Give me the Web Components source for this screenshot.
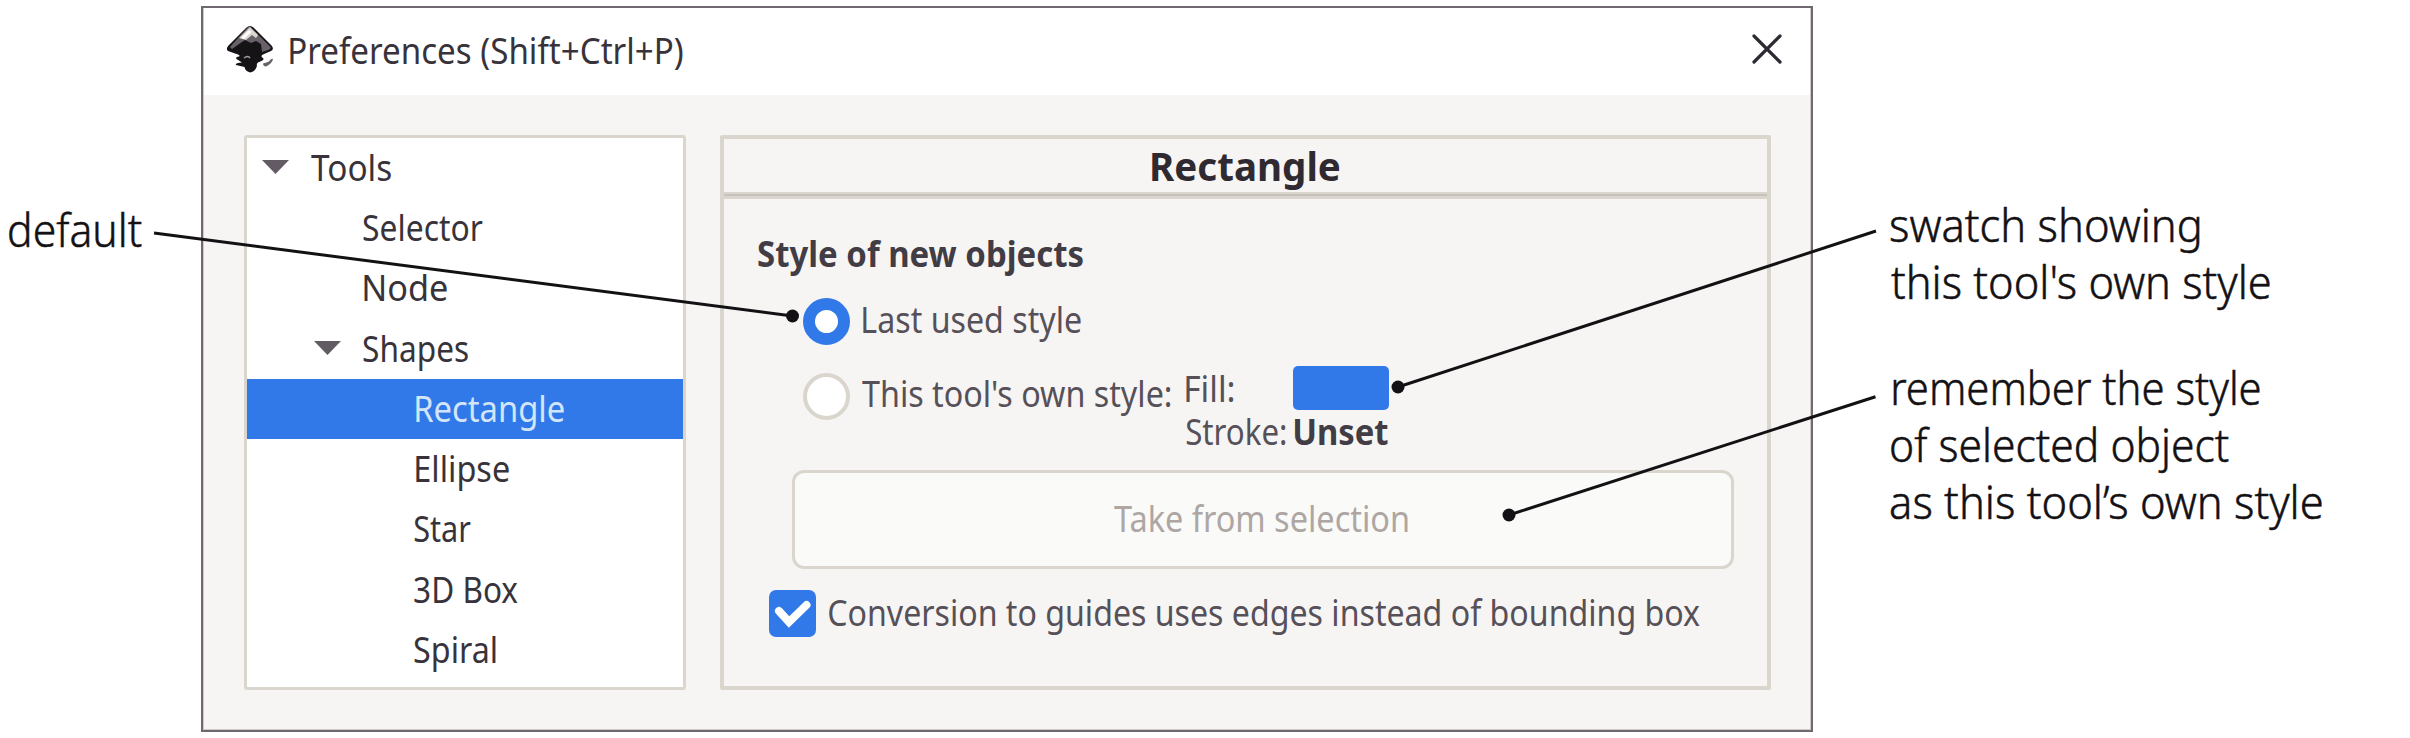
<!DOCTYPE html>
<html lang="en">
<head>
<meta charset="utf-8">
<title>Preferences</title>
<style>
html,body{margin:0;background:#fff}
body{font-family:"Noto Sans","Open Sans",sans-serif;width:2410px;height:738px;overflow:hidden}
</style>
</head>
<body>
<doc-figure></doc-figure>
<script>
const define = (name, html, init) => {
  const t = document.createElement('template');
  t.innerHTML = html;
  customElements.define(name, class extends HTMLElement {
    constructor() {
      super();
      this.attachShadow({mode: 'open'}).append(t.content.cloneNode(true));
    }
    connectedCallback() { if (init) init.call(this, this.shadowRoot); }
  });
};

/* A single line of text whose inked width is set by the "w" attribute. */
define('fit-text', `<style>
:host{display:block;height:40px;line-height:40px;font-size:36px;white-space:nowrap;flex:none}
span{display:inline-block;transform-origin:0 50%;white-space:pre}
</style><span><slot></slot></span>`, function (root) {
  const w = +this.getAttribute('w');
  this.style.width = w + 'px';
  const span = root.querySelector('span');
  const cs = getComputedStyle(this);
  const ctx = document.createElement('canvas').getContext('2d');
  ctx.font = cs.fontWeight + ' ' + cs.fontSize + ' ' + cs.fontFamily;
  const m = ctx.measureText(this.textContent);
  const ink = m.actualBoundingBoxRight + m.actualBoundingBoxLeft;
  const k = w / ink;
  span.style.transform = 'translateX(' + (m.actualBoundingBoxLeft * k) + 'px) scaleX(' + k + ')';
});

define('app-logo', `<style>:host{display:block;width:48px;height:48px;flex:none}svg{display:block}</style>
<svg width="48" height="48" viewBox="0 0 48 48">
<path d="M20.500 2.500Q24 -.5 27.500 2.500L45.500 20.500Q48.500 24 45 26L37 29.500Q34 31 37 33Q39 35 33 37Q30 38 31 41Q29 47 24 47.500Q19 46 18.500 42L10 40Q8.500 38 16 37.500L10.500 34Q9 32 13 31.500Q15 30 9 28.500L2 26Q-.5 24 2.500 20.500Z" fill="#161316"/>
<path d="M24 1.500L44.500 22Q45.500 24 42 25L36 27L35 19L30 16L25 18L19 15L13 19L6 24L4 22L21 3Q24 .5 24 1.500Z" fill="#69616a"/>
<path d="M24 2L32 10L30 13L26 10L20 15L13 13Z" fill="#dad6ce"/>
<path d="M23 5L25.500 7L18 14L15 13Z" fill="#fff"/>
<path d="M18 33Q22 30 24 33" stroke="#a9a09c" stroke-width="1.500" fill="none"/>
<path d="M37 38.500Q41 37.500 43 36.500Q45 33 47 34Q46 39 40 41.500Q37 41 37 38.500Z" fill="#69616a"/>
</svg>`);

define('tree-row', `<style>
:host{display:flex;align-items:center;height:60.3px;box-sizing:border-box;color:#38333a}
:host([selected]){background:#3179e8;color:#d3e5f8}
svg{display:none;margin-right:30px;flex:none;position:relative;top:-1px}
:host([open]) svg{display:block}
</style><svg width="29" height="16" viewBox="0 0 29 16"><path d="M1 1H28L14.500 15Z" fill="#625b63"/></svg><slot></slot>`,
function () { this.style.paddingLeft = this.getAttribute('indent') + 'px'; });

define('tree-list', `<style>
:host{display:block;box-sizing:border-box;width:442px;height:555px;border:3.500px solid #dad6ce;background:#fff;border-radius:3px;overflow:hidden;flex:none}
</style>
<tree-row open indent="13.500"><fit-text w="80" style="margin-left:-9px">Tools</fit-text></tree-row>
<tree-row indent="115.500"><fit-text w="120">Selector</fit-text></tree-row>
<tree-row indent="116.500"><fit-text w="83">Node</fit-text></tree-row>
<tree-row open indent="66"><fit-text w="105" style="margin-left:-9px">Shapes</fit-text></tree-row>
<tree-row selected indent="169"><fit-text w="148">Rectangle</fit-text></tree-row>
<tree-row indent="169"><fit-text w="93">Ellipse</fit-text></tree-row>
<tree-row indent="167"><fit-text w="57">Star</fit-text></tree-row>
<tree-row indent="167"><fit-text w="104">3D Box</fit-text></tree-row>
<tree-row indent="167"><fit-text w="82">Spiral</fit-text></tree-row>`);

define('radio-dot', `<style>
:host{display:block;box-sizing:border-box;width:47px;height:47px;border-radius:50%;border:4px solid #dad6ce;background:#fff;flex:none}
:host([checked]){border:12px solid #3179e8}
</style>`);

define('check-mark', `<style>:host{display:block;width:47px;height:47px;border-radius:7px;background:#3179e8;flex:none}svg{display:block}</style>
<svg width="47" height="47"><path d="M10 21L20 32L37.500 15" fill="none" stroke="#fff" stroke-width="8" stroke-linecap="round"/></svg>`);

define('color-swatch', `<style>:host{display:block;width:96px;height:44px;border-radius:5px;background:#3179e8}</style>`);

define('push-button', `<style>
:host{display:flex;align-items:center;justify-content:center;box-sizing:border-box;width:942px;height:99px;border:3.500px solid #dad6ce;border-radius:12px;background:#fafaf9;color:#aea6a3}
</style><slot></slot>`);

define('settings-panel', `<style>
:host{display:flex;flex-direction:column;box-sizing:border-box;width:1051px;height:555px;border:4px solid #dad6ce;border-radius:2px;color:#565059;flex:none}
header{height:53px;display:flex;align-items:center;justify-content:center;padding-top:2px;box-sizing:border-box;color:#2f2a32;flex:none}
header fit-text{font-size:40px}
.rule{height:7px;background:linear-gradient(#dad6ce 2px,#c8c2bc 2px 4px,#dad6ce 4px);flex:none}
.bold,header{font-weight:700}
.heading{margin:35px 0 0 34px;color:#423c45}
.row{display:flex;align-items:flex-start}
.grid{display:grid;grid-template-columns:109px auto;grid-template-rows:43.300px 43.300px;margin-left:15px}
</style>
<header><fit-text w="188">Rectangle</fit-text></header>
<div class="rule"></div>
<fit-text class="bold heading" w="325">Style of new objects</fit-text>
<div class="row" style="margin:24.500px 0 0 79px;height:67.500px"><radio-dot checked></radio-dot><fit-text w="218" style="margin:2px 0 0 13px">Last used style</fit-text></div>
<div class="row" style="margin-left:79px;height:104.500px"><radio-dot style="margin-top:7px"></radio-dot><fit-text w="309" style="margin:8.500px 0 0 12px">This tool's own style:</fit-text>
<div class="grid"><fit-text w="48" style="margin-top:3px">Fill:</fit-text><color-swatch style="margin-left:-2px;margin-top:.5px"></color-swatch>
<fit-text w="100" style="margin-top:3px">Stroke:</fit-text><fit-text class="bold" w="93" style="margin-top:3px;color:#423c45">Unset</fit-text></div></div>
<push-button style="margin-left:68px"><fit-text w="294" style="margin-left:-5px;margin-top:-2px">Take from selection</fit-text></push-button>
<div class="row" style="margin:21px 0 0 45px"><check-mark></check-mark><fit-text w="871" style="margin:2.500px 0 0 12.500px">Conversion to guides uses edges instead of bounding box</fit-text></div>`);

define('dialog-window', `<style>
:host{display:flex;flex-direction:column;box-sizing:border-box;width:1612px;height:726px;border:2px solid #6f6870;box-shadow:inset 0 0 0 1px #d0cac4;background:#f6f5f3;flex:none}
.bar{display:flex;align-items:flex-start;height:86.500px;margin:0 1px;background:#fff;color:#38333a;flex:none}
.close{margin-left:auto;margin-right:28px;margin-top:26px}
.body{display:flex;gap:34px;padding:40px 0 0 41px}
</style>
<div class="bar"><app-logo style="margin:17px 0 0 22px"></app-logo><fit-text w="393" style="margin:22.500px 0 0 16px">Preferences (Shift+Ctrl+P)</fit-text>
<svg class="close" width="30" height="30"><path d="M2 2L28 28M28 2L2 28" stroke="#2f2a32" stroke-width="3.200" stroke-linecap="round"/></svg></div>
<div class="body"><tree-list></tree-list><settings-panel></settings-panel></div>`);

define('call-out', `<style>
:host{display:block;color:#141114;font-weight:300;-webkit-text-stroke:.5px #141114}
::slotted(fit-text){height:57.300px!important;line-height:57.300px!important;font-size:45px!important}
</style><slot></slot>`);

define('leader-lines', `<style>:host{position:absolute;inset:0;pointer-events:none}svg{display:block}</style>
<svg width="2410" height="738" fill="#141114" stroke="#141114" stroke-width="3">
<path d="M154 233L792.500 316M1876 231L1398 387M1875.500 396.700L1509 515"/>
<g stroke="none"><circle cx="792.500" cy="316" r="6.500"/><circle cx="1398" cy="387" r="6.500"/><circle cx="1509" cy="515" r="6.500"/></g></svg>`);

define('doc-figure', `<style>
:host{display:flex;align-items:flex-start;position:relative;width:2410px;height:738px;overflow:hidden}
.left{width:192px;padding:201px 0 0 9px;flex:none}
dialog-window{margin-top:6px}
.right{padding:196px 0 0 78px;display:flex;flex-direction:column;gap:48px}
</style>
<div class="left"><call-out><fit-text w="133">default</fit-text></call-out></div>
<dialog-window></dialog-window>
<div class="right">
<call-out><fit-text w="308">swatch showing</fit-text><fit-text w="379">this tool's own style</fit-text></call-out>
<call-out><fit-text w="367" style="margin-left:2px">remember the style</fit-text><fit-text w="338">of selected object</fit-text><fit-text w="431">as this tool’s own style</fit-text></call-out>
</div>
<leader-lines></leader-lines>`);
</script>
</body>
</html>
